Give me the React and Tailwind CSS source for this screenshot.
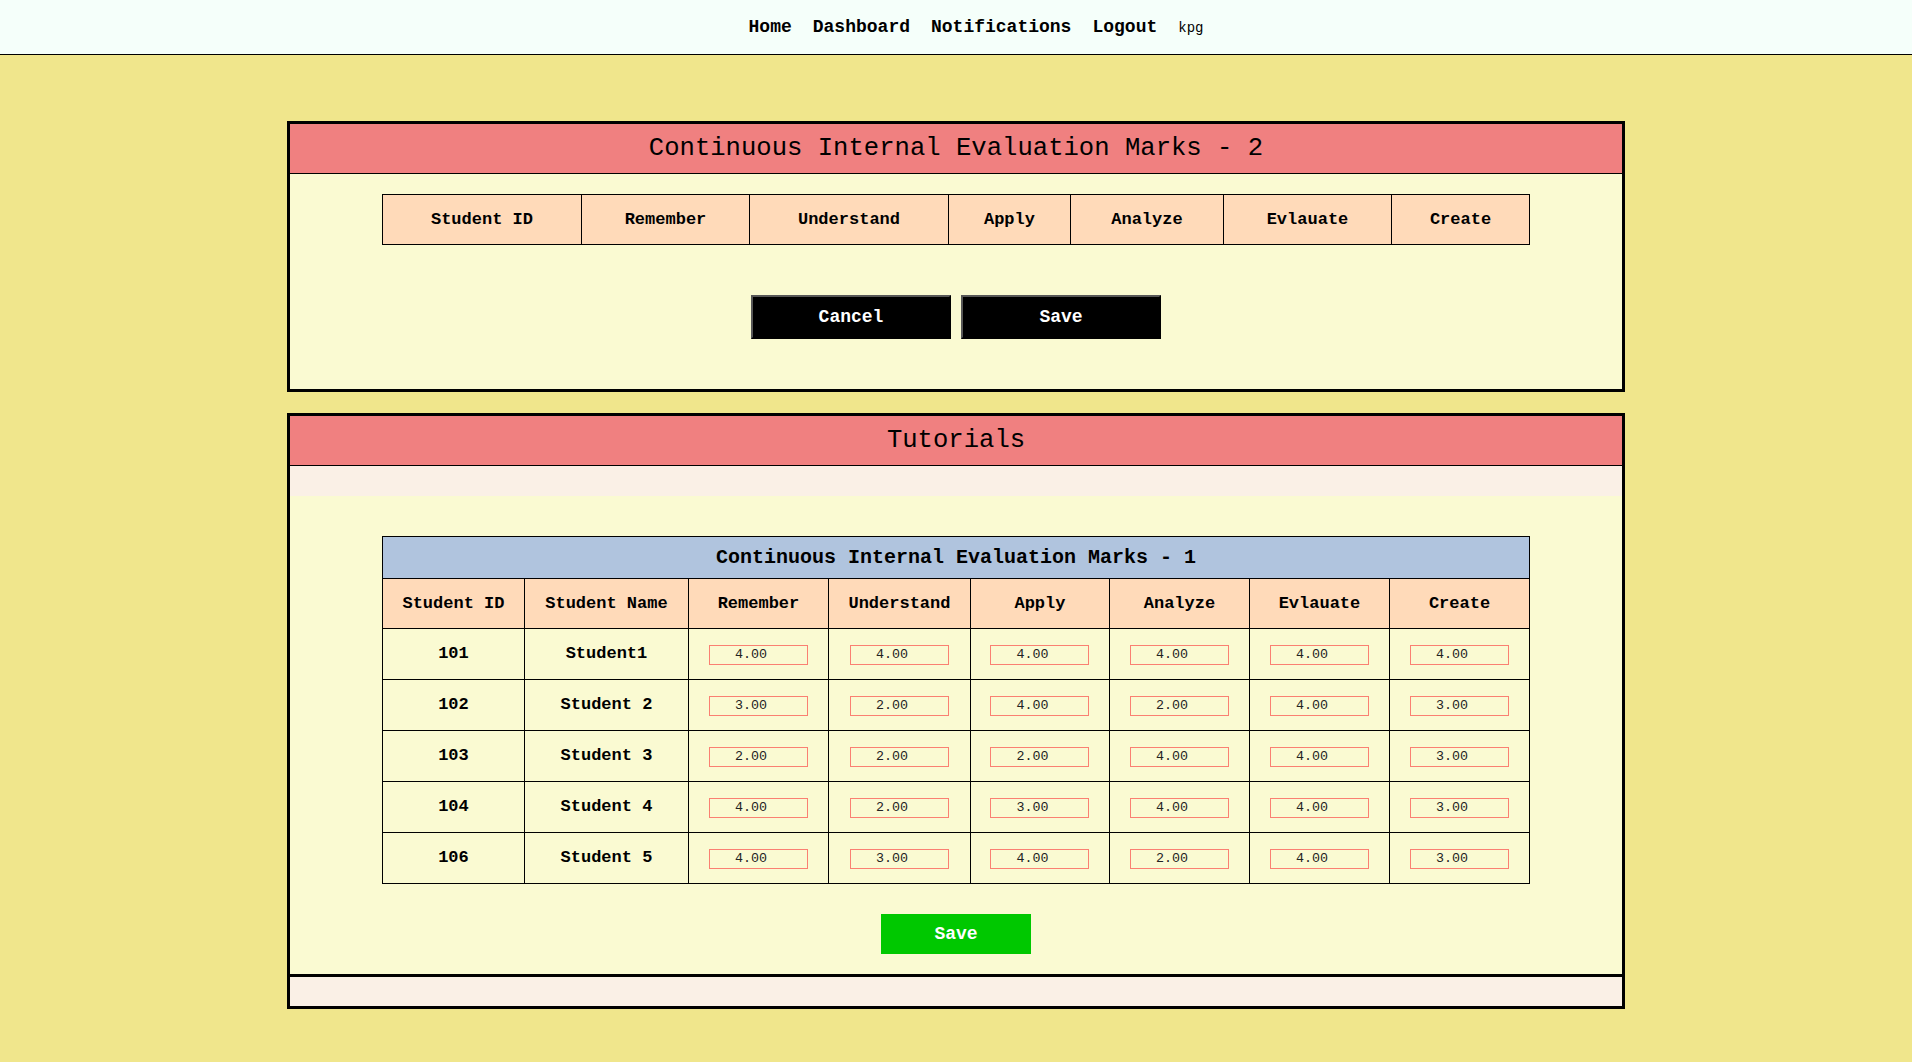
import React from "react"

const students = [
  { id: 101, name: "Student1", marks: ["4.00", "4.00", "4.00", "4.00", "4.00", "4.00"] },
  { id: 102, name: "Student 2", marks: ["3.00", "2.00", "4.00", "2.00", "4.00", "3.00"] },
  { id: 103, name: "Student 3", marks: ["2.00", "2.00", "2.00", "4.00", "4.00", "3.00"] },
  { id: 104, name: "Student 4", marks: ["4.00", "2.00", "3.00", "4.00", "4.00", "3.00"] },
  { id: 106, name: "Student 5", marks: ["4.00", "3.00", "4.00", "2.00", "4.00", "3.00"] },
]

const levels = ["Remember", "Understand", "Apply", "Analyze", "Evlauate", "Create"]
const cie2Widths = [199, 168, 199, 122, 153, 168, 138]
const cie1Widths = [142, 164, 140, 142, 139, 140, 140, 140]

const Navbar = () => (
  <nav className="h-[55px] bg-[#f5fffa] border-b border-black flex items-center justify-center">
    <ul className="flex items-baseline gap-[21px] pl-10 pt-[1px] text-black">
      <li><a href="#" className="text-[18px] font-bold">Home</a></li>
      <li><a href="#" className="text-[18px] font-bold">Dashboard</a></li>
      <li><a href="#" className="text-[18px] font-bold">Notifications</a></li>
      <li><a href="#" className="text-[18px] font-bold">Logout</a></li>
      <li><span className="text-[14px]">kpg</span></li>
    </ul>
  </nav>
)

const PanelTitle = ({ children }) => (
  <h2 className="h-[50px] pt-[2px] flex items-center justify-center bg-[#f08080] border-b border-black text-[25.6px] text-black">
    {children}
  </h2>
)

const DarkButton = ({ children }) => (
  <button className="w-[200px] h-[44px] bg-black text-white text-[18px] font-bold border-2 border-t-[#575757] border-l-[#575757] border-b-black border-r-black">
    {children}
  </button>
)

const CieTwo = () => (
  <section className="w-[70%] mx-auto border-[3px] border-black bg-[#fafad2]">
    <PanelTitle>Continuous Internal Evaluation Marks - 2</PanelTitle>
    <div className="pt-5 pb-[50px]">
      <table className="mx-auto w-[1147px] table-fixed border-collapse">
        <colgroup>
          {cie2Widths.map((w, i) => (
            <col key={i} style={{ width: w }} />
          ))}
        </colgroup>
        <thead>
          <tr className="h-[50px] bg-[#ffdab9]">
            {["Student ID", ...levels].map((h) => (
              <th key={h} className="border border-black text-[17px] font-bold">
                {h}
              </th>
            ))}
          </tr>
        </thead>
      </table>
      <div className="mt-[50px] flex justify-center gap-[10px]">
        <DarkButton>Cancel</DarkButton>
        <DarkButton>Save</DarkButton>
      </div>
    </div>
  </section>
)

const Tutorials = () => (
  <section className="w-[70%] mx-auto mt-[21px] border-[3px] border-black bg-[#fafad2]">
    <PanelTitle>Tutorials</PanelTitle>
    <div className="h-[30px] bg-[#faf0e6]" />
    <div className="pt-10 pb-5">
      <table className="mx-auto w-[1147px] table-fixed border-collapse">
        <colgroup>
          {cie1Widths.map((w, i) => (
            <col key={i} style={{ width: w }} />
          ))}
        </colgroup>
        <thead>
          <tr className="h-[42px] bg-[#b0c4de]">
            <th colSpan={8} className="border border-black text-[20px] font-bold">
              Continuous Internal Evaluation Marks - 1
            </th>
          </tr>
          <tr className="h-[50px] bg-[#ffdab9]">
            {["Student ID", "Student Name", ...levels].map((h) => (
              <th key={h} className="border border-black text-[17px] font-bold">
                {h}
              </th>
            ))}
          </tr>
        </thead>
        <tbody>
          {students.map((s) => (
            <tr key={s.id} className="h-[51px]">
              <td className="border border-black text-center text-[17px] font-bold">{s.id}</td>
              <td className="border border-black text-center text-[17px] font-bold">{s.name}</td>
              {s.marks.map((m, i) => (
                <td key={i} className="border border-black text-center">
                  <input
                    type="number"
                    step="0.01"
                    defaultValue={m}
                    className="w-[99px] h-[20px] px-[2px] border border-[#fa8072] bg-transparent text-center text-[13.33px] text-[#222] outline-none"
                  />
                </td>
              ))}
            </tr>
          ))}
        </tbody>
      </table>
      <div className="mt-[30px] flex justify-center">
        <button className="w-[150px] h-[40px] bg-[#00c800] text-white text-[18px] font-bold">
          Save
        </button>
      </div>
    </div>
    <div className="h-[29px] border-t-[3px] border-black bg-[#faf0e6] box-content" />
  </section>
)

export default function App() {
  return (
    <div className="min-h-[1062px] bg-[#f0e68c] font-['Liberation_Mono',monospace] text-black">
      <Navbar />
      <main className="pt-[66px] pb-10">
        <CieTwo />
        <Tutorials />
      </main>
    </div>
  )
}
